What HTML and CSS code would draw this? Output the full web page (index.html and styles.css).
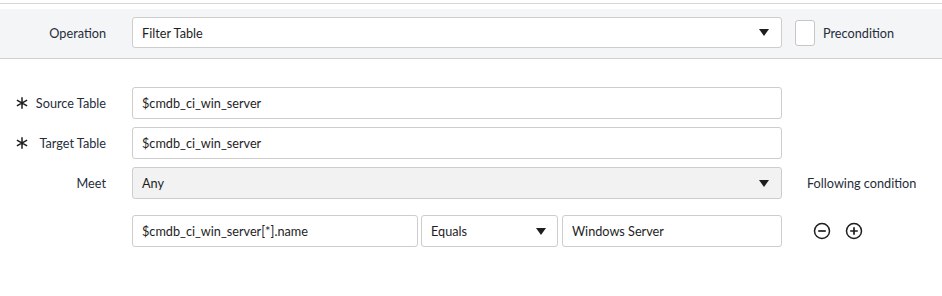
FILE: index.html
```html
<!DOCTYPE html>
<html lang="en">
<head>
    <meta charset="UTF-8">
    <title>Filter Table</title>
    <link rel="stylesheet" href="styles.css">
</head>
<body>
    <div class="divider"></div>
    <div class="op-band">
        <div class="label">Operation</div>
        <div class="select">
            <span>Filter Table</span>
            <svg class="caret" width="10" height="7" viewBox="0 0 10 7"><path d="M0 0h10L5 7z" fill="#1e1e1e"/></svg>
        </div>
        <label class="precondition">
            <span class="check"></span>
            <span>Precondition</span>
        </label>
    </div>

    <div class="form">
        <div class="row">
            <div class="label required">
                <svg class="star" width="12" height="12" viewBox="0 0 12 12"><path d="M6 0.3v11.4M0.9 3.1l10.2 5.8M0.9 8.9l10.2-5.8" stroke="#1e1e1e" stroke-width="1.5"/></svg>
                <span>Source Table</span>
            </div>
            <div class="input">$cmdb_ci_win_server</div>
        </div>
        <div class="row">
            <div class="label required">
                <svg class="star" width="12" height="12" viewBox="0 0 12 12"><path d="M6 0.3v11.4M0.9 3.1l10.2 5.8M0.9 8.9l10.2-5.8" stroke="#1e1e1e" stroke-width="1.5"/></svg>
                <span>Target Table</span>
            </div>
            <div class="input">$cmdb_ci_win_server</div>
        </div>
        <div class="row">
            <div class="label">Meet</div>
            <div class="select readonly">
                <span>Any</span>
                <svg class="caret" width="10" height="7" viewBox="0 0 10 7"><path d="M0 0h10L5 7z" fill="#1e1e1e"/></svg>
            </div>
            <div class="side-note">Following condition</div>
        </div>
        <div class="row condition">
            <div class="label"></div>
            <div class="cond-fields">
                <div class="input field">$cmdb_ci_win_server[*].name</div>
                <div class="select operator">
                    <span>Equals</span>
                    <svg class="caret" width="10" height="7" viewBox="0 0 10 7"><path d="M0 0h10L5 7z" fill="#1e1e1e"/></svg>
                </div>
                <div class="input value">Windows Server</div>
            </div>
            <div class="actions">
                <svg width="18" height="18" viewBox="0 0 18 18"><circle cx="9" cy="9" r="7.5" fill="none" stroke="#1e1e1e" stroke-width="1.5"/><path d="M5.2 9h7.6" stroke="#1e1e1e" stroke-width="1.7"/></svg>
                <svg width="18" height="18" viewBox="0 0 18 18"><circle cx="9" cy="9" r="7.5" fill="none" stroke="#1e1e1e" stroke-width="1.5"/><path d="M5.2 9h7.6M9 5.2v7.6" stroke="#1e1e1e" stroke-width="1.7"/></svg>
            </div>
        </div>
    </div>
</body>
</html>
```

FILE: styles.css
```css
body {
    margin: 0;
    font-family: Lato, "Open Sans", sans-serif;
    font-size: 12.7px;
    color: #1e1e1e;
    background-color: #ffffff;
}
.divider {
    margin-top: 3px;
    height: 5px;
    border-top: 1px solid #d6d6d6;
}
.op-band {
    display: flex;
    align-items: center;
    height: 47px;
    padding-bottom: 2px;
    background-color: #f4f5f6;
    border-bottom: 1px solid #d0d0d0;
}
.label {
    width: 106px;
    flex-shrink: 0;
    margin-right: 26px;
    text-align: right;
    color: #262d3a;
}
.label.required {
    display: flex;
    justify-content: space-between;
    align-items: center;
    padding-left: 16px;
    box-sizing: border-box;
}
.star {
    display: block;
}
.select, .input {
    box-sizing: border-box;
    height: 32px;
    display: flex;
    align-items: center;
    justify-content: space-between;
    padding: 0 12px 0 9px;
    border: 1px solid #cdcdcd;
    border-radius: 3px;
    background-color: #ffffff;
}
.op-band .select {
    width: 650px;
    height: 31px;
}
.caret {
    display: block;
}
.precondition {
    display: flex;
    align-items: center;
    margin-left: 13px;
    color: #262d3a;
}
.check {
    width: 20px;
    height: 26px;
    box-sizing: border-box;
    border: 1px solid #c6c6c6;
    border-radius: 3px;
    background-color: #ffffff;
    margin-right: 8px;
}
.form {
    padding-top: 28px;
}
.row {
    display: flex;
    align-items: center;
    margin-bottom: 8px;
}
.row > .input, .row > .select {
    width: 650px;
}
.select.readonly {
    background-color: #f2f2f2;
    padding-right: 12px;
}
.side-note {
    margin-left: 25px;
    color: #262d3a;
}
.row.condition {
    margin-top: 16px;
}
.cond-fields {
    display: flex;
    gap: 3px;
    width: 650px;
}
.field {
    width: 286px;
}
.operator {
    width: 137px;
    padding-right: 11px;
}
.value {
    width: 220px;
    margin-left: 1px;
}
.actions {
    display: flex;
    gap: 14px;
    margin-left: 31px;
}
```
